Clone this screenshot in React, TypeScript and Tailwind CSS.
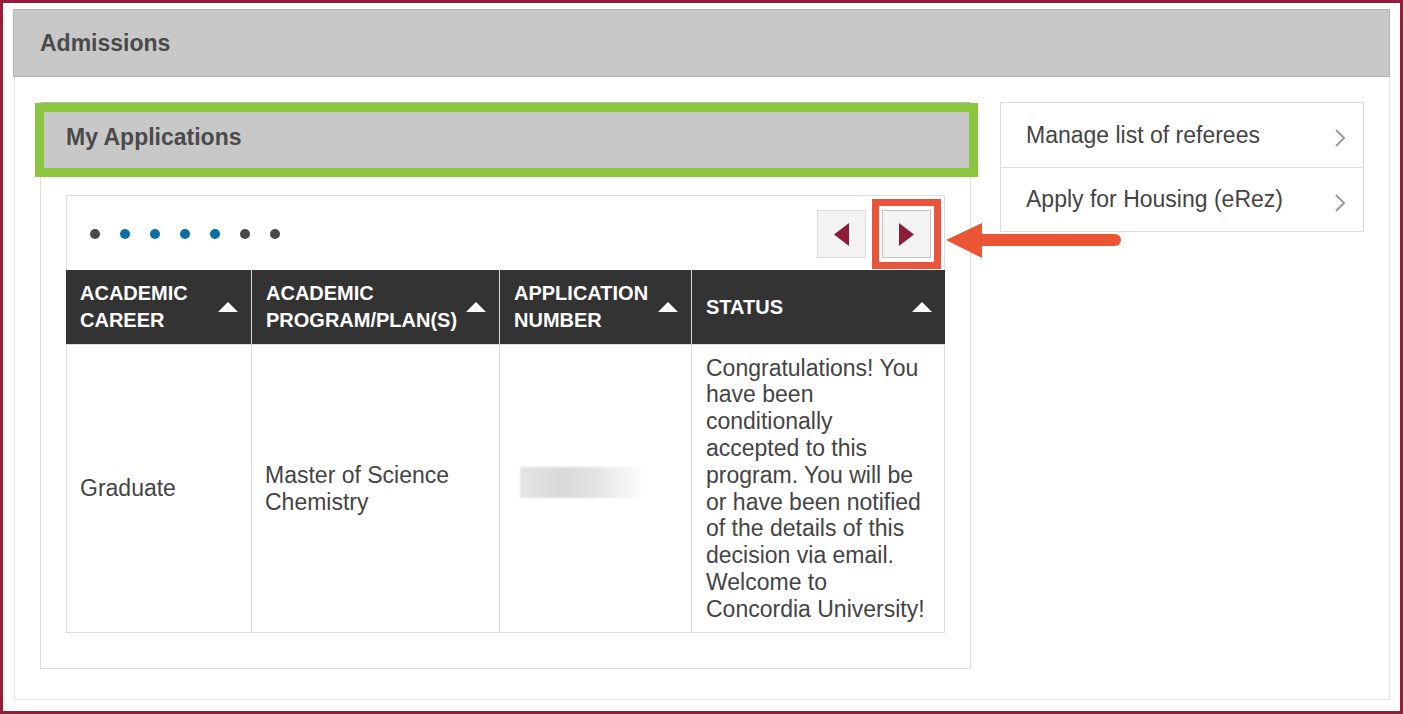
import React from "react";

const SortUp = () => (
  <svg width="20" height="10" viewBox="0 0 20 10" className="shrink-0">
    <polygon points="10,0 20,10 0,10" fill="#ffffff" />
  </svg>
);

const Chevron = () => (
  <svg width="12" height="20" viewBox="0 0 12 20" className="shrink-0 mt-[6px]">
    <polyline points="2,2 10,10 2,18" fill="none" stroke="#9a9a9a" strokeWidth="2" />
  </svg>
);

export default function App() {
  const dots = ["#4a4a4a", "#0b6ea3", "#0b6ea3", "#0b6ea3", "#0b6ea3", "#4a4a4a", "#4a4a4a"];
  const status = [
    "Congratulations! You",
    "have been",
    "conditionally",
    "accepted to this",
    "program. You will be",
    "or have been notified",
    "of the details of this",
    "decision via email.",
    "Welcome to",
    "Concordia University!",
  ];
  return (
    <div className="relative w-[1403px] h-[714px] border-[3px] border-[#961e3a] bg-white font-['Liberation_Sans',Arial,sans-serif] text-[#444444] overflow-hidden">
      <div className="mx-[10px] mt-[6px]">
        <div className="h-[68px] bg-[#c8c8c8] border border-[#b5b5b5] flex items-center pl-[26px] text-[23px] font-bold text-[#4a4a4a]">
          Admissions
        </div>
        <div className="ml-[1px] border-x border-b border-[#e2e2e2] pt-[25px] pb-[30px] px-[25px] flex justify-between items-start">
          {/* My Applications panel */}
          <div className="relative w-[931px] h-[567px] border-x border-b border-[#dedede] flex flex-col">
            <div className="h-[71px] bg-[#c8c8c8] border-t border-[#b4b4b4] flex items-center pl-[25px] pb-[2px] text-[23px] font-bold text-[#4a4a4a]">
              My Applications
            </div>
            <div className="absolute left-[-6px] top-[1px] w-[943px] h-[74px] border-[9px] border-[#8cc63e]" />
            <div className="pt-[22px] px-[25px]">
              <div className="w-[879px]">
                <div className="h-[75px] border-t border-x border-[#dddddd] pt-[2px] pl-[23px] pr-[13px] flex items-center justify-between">
                  <div className="flex gap-[20px]">
                    {dots.map((c, i) => (
                      <span key={i} className="block w-[10px] h-[10px] rounded-full" style={{ backgroundColor: c }} />
                    ))}
                  </div>
                  <div className="flex gap-[16px]">
                    <button className="w-[49px] h-[48px] bg-[#f4f4f4] border border-[#dcdcdc] flex items-center justify-center">
                      <svg width="15" height="23" viewBox="0 0 15 23">
                        <polygon points="15,0 15,23 0,11.5" fill="#8c1d3b" />
                      </svg>
                    </button>
                    <button className="relative w-[49px] h-[48px] bg-[#f4f4f4] border border-[#c4c4c4] flex items-center justify-center">
                      <svg width="15" height="23" viewBox="0 0 15 23">
                        <polygon points="0,0 15,11.5 0,23" fill="#8c1d3b" />
                      </svg>
                      <span className="absolute left-[-11px] top-[-12px] w-[69px] h-[70px] border-[7px] border-[#e9553a]" />
                    </button>
                  </div>
                </div>
                {/* table header */}
                <div className="grid grid-cols-[185px_248px_192px_254px] h-[74px] bg-[#333333] text-white text-[20px] font-bold leading-[27px]">
                  <div className="flex items-center justify-between pl-[14px] pr-[13px]">
                    <span className="whitespace-nowrap">ACADEMIC<br />CAREER</span>
                    <SortUp />
                  </div>
                  <div className="flex items-center justify-between pl-[14px] pr-[13px] border-l border-[#d9d9d9]">
                    <span className="whitespace-nowrap">ACADEMIC<br />PROGRAM/PLAN(S)</span>
                    <SortUp />
                  </div>
                  <div className="flex items-center justify-between pl-[14px] pr-[13px] border-l border-[#d9d9d9]">
                    <span className="whitespace-nowrap">APPLICATION<br />NUMBER</span>
                    <SortUp />
                  </div>
                  <div className="flex items-center justify-between pl-[14px] pr-[13px] border-l border-[#d9d9d9]">
                    <span className="whitespace-nowrap">STATUS</span>
                    <SortUp />
                  </div>
                </div>
                {/* table body */}
                <div className="grid grid-cols-[184px_248px_192px_253px] h-[289px] border border-[#dddddd] text-[23px] leading-[26.8px] text-[#444444]">
                  <div className="flex items-center px-[13px]">Graduate</div>
                  <div className="flex items-center px-[13px] border-l border-[#dddddd]">
                    <span className="whitespace-nowrap">Master of Science<br />Chemistry</span>
                  </div>
                  <div className="flex items-center px-[14px] border-l border-[#dddddd]">
                    <div className="ml-[6px] mb-[13px] w-[125px] h-[31px] blur-[1px] bg-[linear-gradient(to_right,#e4e4e4_0%,#d9d9d9_35%,#e2e2e2_60%,#ffffff_100%)]" />
                  </div>
                  <div className="flex items-center px-[14px] border-l border-[#dddddd]">
                    <span className="whitespace-nowrap">
                      {status.map((l, i) => (
                        <React.Fragment key={i}>
                          {l}
                          {i < status.length - 1 && <br />}
                        </React.Fragment>
                      ))}
                    </span>
                  </div>
                </div>
              </div>
            </div>
          </div>
          {/* links */}
          <div className="w-[364px] border border-[#dddddd] text-[23px] text-[#444444]">
            <div className="h-[65px] border-b border-[#dddddd] flex items-center justify-between pl-[25px] pr-[17px]">
              <span>Manage list of referees</span>
              <Chevron />
            </div>
            <div className="h-[63px] flex items-center justify-between pl-[25px] pr-[17px]">
              <span>Apply for Housing (eRez)</span>
              <Chevron />
            </div>
          </div>
        </div>
      </div>
      {/* annotation arrow */}
      <svg className="absolute left-[937px] top-[212px]" width="185" height="45" viewBox="0 0 185 45">
        <polygon points="6,25 42,8 42,43" fill="#ea5634" />
        <line x1="40" y1="25" x2="175" y2="25" stroke="#ea5634" strokeWidth="12" strokeLinecap="round" />
      </svg>
    </div>
  );
}
